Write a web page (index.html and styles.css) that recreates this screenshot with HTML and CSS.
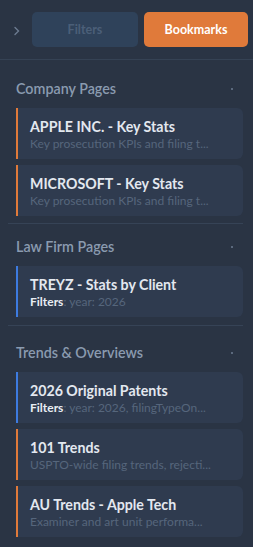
FILE: index.html
```html
<!DOCTYPE html>
<html lang="en">
<head>
    <meta charset="UTF-8">
    <meta name="viewport" content="width=device-width, initial-scale=1.0">
    <title>Bookmarks</title>
    <link rel="stylesheet" href="styles.css">
</head>
<body>
    <div class="panel">
        <div class="topbar">
            <span class="toggle">
                <svg width="8" height="10" viewBox="0 0 8 10"><path d="M2 1.5 L5.5 5 L2 8.5" fill="none" stroke="#6c7b90" stroke-width="1.4" stroke-linecap="round"/></svg>
            </span>
            <button class="tab tab-muted">Filters</button>
            <button class="tab tab-active">Bookmarks</button>
        </div>

        <div class="section first">
            <div class="section-head">
                <span>Company Pages</span>
                <span class="caret"></span>
            </div>
            <div class="card orange">
                <div class="card-title">APPLE INC. - Key Stats</div>
                <div class="card-sub">Key prosecution KPIs and filing t...</div>
            </div>
            <div class="card orange">
                <div class="card-title">MICROSOFT - Key Stats</div>
                <div class="card-sub">Key prosecution KPIs and filing t...</div>
            </div>
        </div>

        <div class="section">
            <div class="section-head">
                <span>Law Firm Pages</span>
                <span class="caret"></span>
            </div>
            <div class="card blue">
                <div class="card-title">TREYZ - Stats by Client</div>
                <div class="card-sub"><b>Filters</b>: year: 2026</div>
            </div>
        </div>

        <div class="section last">
            <div class="section-head">
                <span>Trends &amp; Overviews</span>
                <span class="caret"></span>
            </div>
            <div class="card blue">
                <div class="card-title">2026 Original Patents</div>
                <div class="card-sub"><b>Filters</b>: year: 2026, filingTypeOn...</div>
            </div>
            <div class="card orange">
                <div class="card-title">101 Trends</div>
                <div class="card-sub">USPTO-wide filing trends, rejecti...</div>
            </div>
            <div class="card orange">
                <div class="card-title">AU Trends - Apple Tech</div>
                <div class="card-sub">Examiner and art unit performa...</div>
            </div>
        </div>
    </div>
</body>
</html>
```

FILE: styles.css
```css
body {
    margin: 0;
    background-color: #2a3444;
    font-family: 'Lato', 'Noto Sans', sans-serif;
    color: #e3e8ef;
}

.panel {
    width: 253px;
    min-height: 547px;
}

.topbar {
    display: flex;
    align-items: center;
    gap: 6px;
    padding: 12px 5px 12px 8px;
    border-bottom: 1px solid #354254;
}

.toggle {
    width: 18px;
    display: flex;
    justify-content: center;
    padding-top: 2px;
}

.tab {
    height: 35px;
    border: none;
    border-radius: 5px;
    font-family: inherit;
    font-size: 12.5px;
    font-weight: 700;
    cursor: pointer;
}

.tab-muted {
    width: 106px;
    background-color: #2f425a;
    color: #4b5f78;
}

.tab-active {
    width: 104px;
    background-color: #e07a3a;
    color: #ffffff;
}

.section {
    margin: 0 10px 0 8px;
    padding: 0 0 8px 8px;
    border-bottom: 1px solid #364356;
}

.section.first {
    padding-top: 6px;
    padding-bottom: 7px;
}

.section.last {
    border-bottom: none;
    padding-top: 4px;
}

.section-head {
    display: flex;
    justify-content: space-between;
    align-items: center;
    padding: 15px 10px 11px 0;
    font-size: 14.3px;
    font-weight: 600;
    color: #8a9bb0;
    line-height: 16px;
}

.caret {
    width: 2px;
    height: 2px;
    background-color: #6c7b90;
    border-radius: 1px;
}

.card {
    background-color: #2f3b4f;
    border-radius: 0 6px 6px 0;
    padding: 10px 10px 7px 12px;
    margin-bottom: 6px;
    border-left: 2px solid #e07a3a;
}

.card:last-child {
    margin-bottom: 0;
}

.card.blue {
    border-left-color: #3d7be0;
}

.card-title {
    font-size: 14.2px;
    font-weight: 700;
    line-height: 18px;
    color: #e3e8ef;
    white-space: nowrap;
}

.card-sub {
    font-size: 12px;
    line-height: 16px;
    color: #56667c;
    white-space: nowrap;
    overflow: hidden;
}

.card-sub b {
    color: #e8edf3;
    font-weight: 700;
}
```
